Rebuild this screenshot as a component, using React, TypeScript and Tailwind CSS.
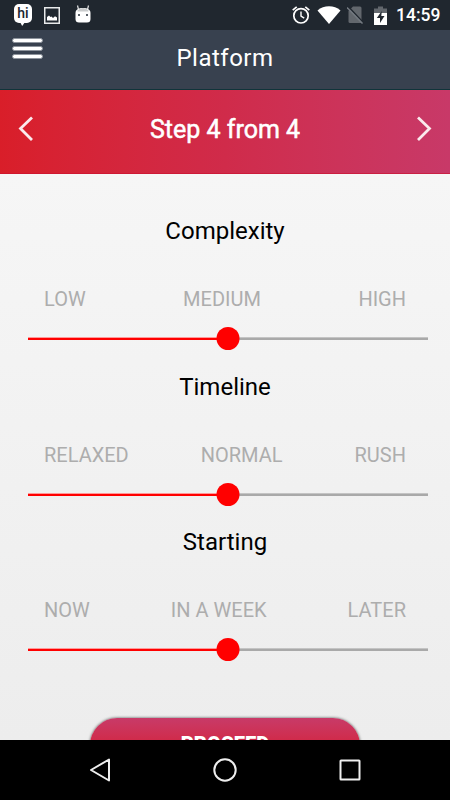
import { Fragment } from "react";

interface SliderSection {
  title: string;
  labels: string[];
  value: number;
}

const sections: SliderSection[] = [
  { title: "Complexity", labels: ["LOW", "MEDIUM", "HIGH"], value: 50 },
  { title: "Timeline", labels: ["RELAXED", "NORMAL", "RUSH"], value: 50 },
  { title: "Starting", labels: ["NOW", "IN A WEEK", "LATER"], value: 50 },
];

function StatusBar() {
  return (
    <div className="flex h-[30px] shrink-0 items-center justify-between bg-[#20272f] pl-[14px] pr-[10px] text-white">
      <div className="flex items-center">
        {/* Messenger bubble */}
        <div className="relative -mt-[4px] flex h-[19px] w-[18px] items-center justify-center rounded-[5px] bg-white text-[14px] font-medium leading-none text-[#20272f]">
          <span className="-mt-px">hi</span>
          <svg className="absolute left-[6px] top-[18px]" width="5" height="4" viewBox="0 0 5 4">
            <path d="M0 0h5L2.2 4z" fill="#fff" />
          </svg>
        </div>

        {/* Picture */}
        <svg className="ml-[12px]" width="16" height="17" viewBox="0 0 16 17">
          <rect x=".75" y=".75" width="14.5" height="15.5" fill="none" stroke="#e8eaeb" strokeWidth="1.5" />
          <path d="M3 13.500V10l2-1.500L6.500 10l1-.5L9 11l2-1.700L13 10.500v3z" fill="#fff" />
        </svg>

        {/* Android head */}
        <svg className="-mt-[3px] ml-[15px]" width="16" height="18" viewBox="0 0 16 18">
          <path d="M3.500 4.500L2.500.500M12.500 4.500l1-4" stroke="#dfe1e2" strokeWidth="1.200" />
          <path d="M.500 8C.500 4.800 3.500 3 8 3s7.500 1.800 7.500 5v6q0 3.500-3.500 3.500H4Q.500 17.500.500 14z" fill="#fff" />
          <path d="M2.500 5.500Q4.500 3 8 3t5.500 2.500v1h-11z" fill="#c9cbcc" />
          <rect x="3" y="9" width="2" height="2" fill="#596068" />
          <rect x="11" y="9" width="2" height="2" fill="#596068" />
        </svg>
      </div>

      <div className="flex items-center">
        {/* Alarm */}
        <svg width="18" height="18" viewBox="0 0 18 18" fill="none" stroke="#fff">
          <circle cx="9" cy="9.800" r="7.200" strokeWidth="1.700" />
          <path d="M9 5.500v4.700l3.200 2" strokeWidth="1.400" />
          <path d="M.700 4.200L4.700.900M17.300 4.200L13.300.900" strokeWidth="1.700" />
        </svg>

        {/* Wifi */}
        <svg className="ml-[7px]" width="24" height="18" viewBox="0 0 24 18">
          <path d="M.500 4.500Q5.500.300 12 .300t11.500 4.200L12 18z" fill="#fff" />
        </svg>

        {/* No SIM */}
        <svg className="ml-[6px]" width="17" height="18" viewBox="0 0 17 18">
          <path d="M6 .500h7q1.500 0 1.500 1.500v15H3q-1.500 0-1.500-1.500V5z" fill="#62676d" />
          <path d="M1.200 .500l15.500 16.500" stroke="#20272f" strokeWidth="1.500" />
          <path d="M0 1.500l15.500 16" stroke="#737980" strokeWidth="1.500" />
        </svg>

        {/* Battery */}
        <svg className="ml-[10px]" width="13" height="19" viewBox="0 0 13 19">
          <path d="M0 2.500h4V.500h5v2h4V8H0z" fill="#62676d" />
          <path d="M0 7h13v12H0z" fill="#fff" />
          <path d="M7.800 5L2.800 12h3.200v5l4.500-7H7.300z" fill="#20272f" />
        </svg>

        <span className="ml-[9px] w-[44px] whitespace-nowrap text-[17.500px] font-medium leading-[32px]">
          14:59
        </span>
      </div>
    </div>
  );
}

function Header() {
  return (
    <header className="grid h-[60px] shrink-0 grid-cols-[60px_1fr_60px] border-b border-[#10343a] bg-[#38414f]">
      <button className="flex flex-col gap-[3px] pl-[12px] pt-[8px]" aria-label="Menu">
        <span className="h-[5px] w-[31px] rounded-full border border-[#8d939c] bg-white" />
        <span className="h-[5px] w-[31px] rounded-full border border-[#8d939c] bg-white" />
        <span className="h-[5px] w-[31px] rounded-full border border-[#8d939c] bg-white" />
      </button>
      <h1 className="pt-[12px] text-center text-[24px] leading-[32px] tracking-[0.500px] text-white">
        Platform
      </h1>
    </header>
  );
}

function StepBar() {
  return (
    <div className="flex h-[84px] shrink-0 items-center justify-between border-b border-[#c9102f]/60 bg-linear-to-r from-[#d91e29] via-[#d02b4a] to-[#c83968] px-[18px] pb-[5px]">
      <svg width="16" height="26" viewBox="0 0 16 26" fill="none" stroke="#fbeaed" strokeWidth="2.800">
        <path d="M14 1.500L2.500 12.500 14 24" />
      </svg>
      <h2 className="pt-[2px] text-[25px] leading-[32px] text-white [-webkit-text-stroke:0.500px_white]">
        Step 4 from 4
      </h2>
      <svg width="16" height="26" viewBox="0 0 16 26" fill="none" stroke="#fbeaed" strokeWidth="2.800">
        <path d="M2 1.500l11.500 11L2 24" />
      </svg>
    </div>
  );
}

function Slider({ value }: { value: number }) {
  return (
    <div className="relative ml-[28px] mr-[22px] flex h-[25px] items-center">
      <div className="h-[3px] border-t border-[#f99] bg-[#f00]" style={{ width: `${value}%` }} />
      <div className="h-[3px] flex-1 border-t border-[#c4c4c4] bg-[#a9a9a9]" />
      <div
        className="absolute top-[1px] size-[23px] -translate-x-1/2 rounded-full bg-[#f00]"
        style={{ left: `${value}%` }}
      />
    </div>
  );
}

export default function App() {
  return (
    <div className="flex h-[800px] w-[450px] flex-col overflow-hidden bg-black font-['Roboto',sans-serif]">
      <StatusBar />
      <Header />
      <StepBar />

      <main className="flex min-h-0 flex-1 flex-col overflow-hidden bg-linear-to-b from-[#f6f6f6] to-[#ededed] pt-[41px]">
        {sections.map((section) => (
          <Fragment key={section.title}>
            <h3 className="h-[32px] shrink-0 text-center text-[24px] leading-[32px] text-black">
              {section.title}
            </h3>
            <div className="mx-[44px] mt-[40px] flex shrink-0 justify-between text-[20px] leading-[24px] text-[#adadad]">
              {section.labels.map((label) => (
                <span key={label}>{label}</span>
              ))}
            </div>
            <div className="mb-[19.600px] mt-[15px] shrink-0">
              <Slider value={section.value} />
            </div>
          </Fragment>
        ))}
        <button className="mx-auto mt-[36px] h-[54px] w-[270px] shrink-0 rounded-[27px] bg-linear-to-b from-[#c83a68] via-[#d02b4b] via-40% to-[#d91e29] text-[20px] font-black leading-[51px] text-white shadow-[0_0_3px_rgba(0,0,0,0.7)]">
          PROCEED
        </button>
      </main>

      <nav className="flex h-[60px] shrink-0 items-center justify-between bg-black pl-[89px] pr-[89px]">
        <svg width="22" height="24" viewBox="0 0 22 24" fill="none" stroke="#eee" strokeWidth="2" strokeLinejoin="round">
          <path d="M20 1.500v21L2 12z" />
        </svg>
        <svg width="24" height="24" viewBox="0 0 24 24" fill="none" stroke="#eee" strokeWidth="2">
          <circle cx="12" cy="12" r="10.700" />
        </svg>
        <svg width="22" height="22" viewBox="0 0 22 22" fill="none" stroke="#eee" strokeWidth="2">
          <rect x="1.500" y="1.500" width="19" height="19" rx=".5" />
        </svg>
      </nav>
    </div>
  );
}
